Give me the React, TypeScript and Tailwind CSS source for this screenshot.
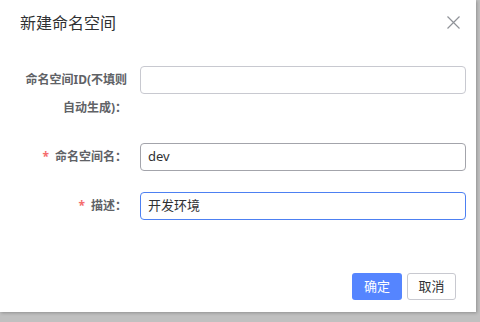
import React from "react";

function Label({ children, required }: { children: React.ReactNode; required?: boolean }) {
  return (
    <div className="w-[140px] shrink-0 pl-[20px] pr-[13px] text-right text-[12px] font-bold leading-[28px] text-[#606266]">
      {required && <span className="mr-[6px] text-[#f56c6c]">*</span>}
      {children}
    </div>
  );
}

export default function App() {
  return (
    <div
      className="h-[322px] w-[480px] overflow-hidden bg-[#c0c0c0]"
      style={{ fontFamily: '"Noto Sans", "Noto Sans CJK SC", sans-serif' }}
    >
      <div className="relative h-[312px] w-[476px] bg-white shadow-[1px_1px_3px_rgba(0,0,0,0.25)]">
        <div className="flex items-center justify-between pl-[20px] pr-[16px] pt-[11px]">
          <div className="text-[16px] leading-[24px] text-[#303133]">新建命名空间</div>
          <svg width="13" height="13" viewBox="0 0 13 13" className="mt-[-2px]">
            <path d="M0.5 0.5 L12.5 12.5 M12.5 0.5 L0.5 12.5" stroke="#909399" strokeWidth="1.2" fill="none" />
          </svg>
        </div>
        <div className="pr-[10px] pt-[31px]">
          <div className="mb-[21px] flex">
            <Label>
              命名空间ID(不填则
              <br />
              自动生成)：
            </Label>
            <div className="h-[28px] flex-1 rounded-[4px] border border-[#c8c9d0] bg-white" />
          </div>
          <div className="mb-[21px] flex">
            <Label required>命名空间名：</Label>
            <div className="flex h-[28px] flex-1 items-center rounded-[4px] border border-[#a3a4ab] bg-white px-[7px] text-[13px] text-[#303133]">
              dev
            </div>
          </div>
          <div className="flex">
            <Label required>描述：</Label>
            <div className="flex h-[28px] flex-1 items-center rounded-[4px] border border-[#4d80f2] bg-white px-[7px] text-[13px] text-[#303133]">
              开发环境
            </div>
          </div>
        </div>
        <div className="absolute bottom-[12px] right-[20px] flex gap-[5px]">
          <button className="h-[27px] w-[50px] rounded-[3px] bg-[#5585ff] text-[13px] text-white">确定</button>
          <button className="h-[27px] w-[49px] rounded-[3px] border border-[#c8c9d0] bg-white text-[13px] text-[#303133]">取消</button>
        </div>
      </div>
    </div>
  );
}
